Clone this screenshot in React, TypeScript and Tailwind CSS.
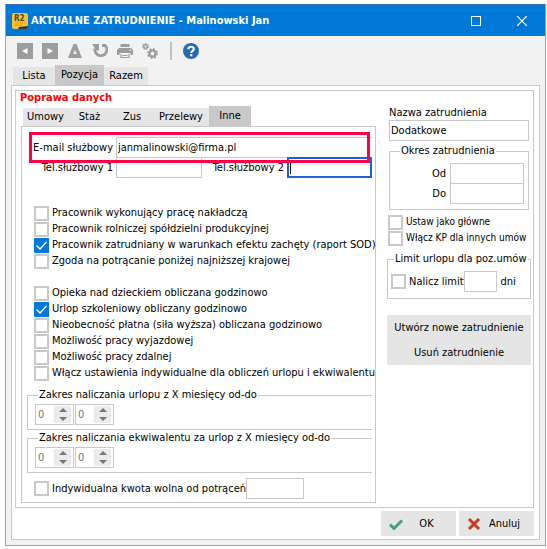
import React, { useState } from 'react';

const FIELD = 'h-[21px] min-w-0 border border-[#c8c8c8] bg-white px-px outline-none';

const EMPLOYEE_FLAGS = [
  { label: 'Pracownik wykonujący pracę nakładczą', checked: false },
  { label: 'Pracownik rolniczej spółdzielni produkcyjnej', checked: false },
  { label: 'Pracownik zatrudniany w warunkach efektu zachęty (raport SOD)', checked: true },
  { label: 'Zgoda na potrącanie poniżej najniższej krajowej', checked: false },
];

const TIME_FLAGS = [
  { label: 'Opieka nad dzieckiem obliczana godzinowo', checked: false },
  { label: 'Urlop szkoleniowy obliczany godzinowo', checked: true },
  { label: 'Nieobecność płatna (siła wyższa) obliczana godzinowo', checked: false },
  { label: 'Możliwość pracy wyjazdowej', checked: false },
  { label: 'Możliwość pracy zdalnej', checked: false },
  { label: 'Włącz ustawienia indywidualne dla obliczeń urlopu i ekwiwalentu', checked: false },
];

function Checkbox({ label, checked = false }: { label: string; checked?: boolean }) {
  return (
    <label className="flex h-4 items-center gap-[3px] whitespace-nowrap">
      <span className="relative block h-[15px] w-[15px] shrink-0">
        <input
          type="checkbox"
          defaultChecked={checked}
          className="peer block h-[15px] w-[15px] appearance-none border-2 border-[#c8c8c8] bg-white checked:border-[#0078d7] checked:bg-[#0078d7]"
        />
        <svg viewBox="0 0 15 15" className="pointer-events-none absolute inset-0 hidden peer-checked:block">
          <path d="M2.5 7.5l3.5 3.5 6.5-7" fill="none" stroke="#fff" strokeWidth="1.3" />
        </svg>
      </span>
      {label}
    </label>
  );
}

function Spinner({ label }: { label: string }) {
  const [value, setValue] = useState(0);
  return (
    <div className="flex h-[21px] w-[39px] border border-[#c8c8c8] bg-white p-px">
      <input
        aria-label={label}
        value={value}
        onChange={(e) => setValue(Number(e.target.value) || 0)}
        className="w-[17px] min-w-0 pl-px text-[#777] outline-none"
      />
      <div className="flex w-[17px] flex-col bg-[#ebebeb]">
        <button type="button" aria-label="Zwiększ" onClick={() => setValue(value + 1)} className="flex h-2 items-center justify-center">
          <svg width="8" height="4" viewBox="0 0 8 4">
            <path d="M0 4l4-4 4 4z" fill="#777" />
          </svg>
        </button>
        <button type="button" aria-label="Zmniejsz" onClick={() => setValue(Math.max(0, value - 1))} className="flex h-[9px] items-center justify-center">
          <svg width="8" height="4" viewBox="0 0 8 4">
            <path d="M0 0l4 4 4-4z" fill="#777" />
          </svg>
        </button>
      </div>
    </div>
  );
}

function RangeGroup({ title }: { title: string }) {
  return (
    <fieldset className="ml-[5px] border border-r-0 border-[#c8c8c8] pt-[2px] pb-1 pl-[7px]">
      <legend className="ml-[3px] h-[14px] px-px leading-[14px] whitespace-nowrap">{title}</legend>
      <div className="flex gap-px">
        <Spinner label={title + ' od'} />
        <Spinner label={title + ' do'} />
      </div>
    </fieldset>
  );
}

function AppLogo() {
  return (
    <svg width="16" height="16" viewBox="0 0 16 16" className="shrink-0" fontFamily="DejaVu Sans Condensed">
      <rect width="16" height="16" rx="2" fill="#f8c22c" />
      <path d="M7 14L16 13v1a2 2 0 0 1-2 2H6z" fill="#3b3422" />
      <path d="M2.500 10h11M2.500 12h8" stroke="#cfa02a" strokeWidth="1" />
      <text x="2" y="8" fontSize="8" fontWeight="bold" fill="#54481f">
        R2
      </text>
    </svg>
  );
}

function Toolbar() {
  return (
    <div className="flex h-[29px] items-center gap-[9px] pl-[11px] text-[#9d9d9d]">
      <button type="button" aria-label="Poprzedni">
        <svg width="16" height="16" viewBox="0 0 16 16" className="block">
          <rect width="16" height="16" fill="currentColor" />
          <path d="M10.5 5v6L5 8z" fill="#fff" />
        </svg>
      </button>
      <button type="button" aria-label="Następny">
        <svg width="16" height="16" viewBox="0 0 16 16" className="block">
          <rect width="16" height="16" fill="currentColor" />
          <path d="M5.5 5v6L11 8z" fill="#fff" />
        </svg>
      </button>
      <button type="button" aria-label="Do góry">
        <svg width="16" height="16" viewBox="0 0 16 16" className="block">
          <path fillRule="evenodd" d="M6.500 1h3l5.500 14H1zM8 7l-1.800 4h3.600z" fill="currentColor" />
        </svg>
      </button>
      <button type="button" aria-label="Odśwież">
        <svg width="16" height="16" viewBox="0 0 16 16" className="block">
          <path d="M10 2.500H13.200A6 6 0 1 1 3 5.500" fill="none" stroke="currentColor" strokeWidth="2.800" />
          <path d="M0 1h7v6.500H4.500z" fill="currentColor" />
        </svg>
      </button>
      <button type="button" aria-label="Drukuj">
        <svg width="16" height="16" viewBox="0 0 16 16" className="block">
          <path d="M3.500 1h9v3h-9zM2 5h12l2 2v5h-2.500v-2h-11v2H0V7z" fill="currentColor" />
          <path d="M4 11v3.500h8V11M5.500 12.500h5" fill="none" stroke="currentColor" strokeWidth="1.200" />
          <path d="M12.500 6.500h1.500v1.200h-1.500z" fill="#f2f2f2" />
        </svg>
      </button>
      <button type="button" aria-label="Ustawienia">
        <svg width="16" height="16" viewBox="0 0 16 16" className="block" fill="none" stroke="currentColor">
          <circle cx="10.500" cy="10.500" r="3.100" strokeWidth="2.400" />
          <circle cx="10.500" cy="10.500" r="4.600" strokeWidth="1.800" strokeDasharray="1.806 1.806" />
          <circle cx="3.500" cy="3.500" r="1.800" strokeWidth="1.400" />
          <circle cx="3.500" cy="3.500" r="2.900" strokeWidth="1.200" strokeDasharray="1.300 1.302" />
        </svg>
      </button>
      <div className="ml-[3px] h-[18px] w-[2px] bg-[#c3c3c3]" />
      <button type="button" aria-label="Pomoc" className="ml-[2px]">
        <svg width="16" height="16" viewBox="0 0 16 16" className="block">
          <circle cx="8" cy="8" r="8" fill="#2a6ab0" />
          <path d="M5.300 6.200C5.300 2.800 10.800 2.900 10.800 6c0 1.900-2.600 1.900-2.600 4" fill="none" stroke="#fff" strokeWidth="2" />
          <path d="M7.100 11.200h2.200v2H7.100z" fill="#fff" />
        </svg>
      </button>
    </div>
  );
}

function App() {
  return (
    <div className="bg-white pt-1 pr-px pb-[3px] pl-[5px] font-['DejaVu_Sans_Condensed','DejaVu_Sans',sans-serif] text-[11px] leading-[14px] text-black">
      <div className="border border-[#8ba6cf] border-t-[#3c70ad] bg-[#f2f2f2]">
        <header className="flex h-[31px] items-center bg-[#0078d7] pl-[6px] text-white">
          <AppLogo />
          <h1 className="ml-[3px] flex-1 font-bold whitespace-nowrap">AKTUALNE ZATRUDNIENIE - Malinowski Jan</h1>
          <button type="button" aria-label="Maksymalizuj" className="flex w-[46px] justify-center">
            <span className="block h-[10px] w-[10px] border border-white" />
          </button>
          <button type="button" aria-label="Zamknij" className="flex w-[46px] justify-center">
            <svg width="10" height="10" viewBox="0 0 10 10">
              <path d="M0 0l10 10M10 0L0 10" stroke="#fff" strokeWidth="1.200" />
            </svg>
          </button>
        </header>

        <Toolbar />

        <nav className="flex h-5 items-end pl-[7px]">
          <button type="button" className="h-[18px] w-[42px] bg-[#e5e5e5]">Lista</button>
          <button type="button" className="h-5 w-[49px] bg-[#c8c8c8]">Pozycja</button>
          <button type="button" className="h-[18px] w-11 bg-[#e5e5e5]">Razem</button>
        </nav>

        <main className="mx-[5px] mb-[5px] border border-[#c8c8c8] bg-white pt-1 pr-[5px] pb-[3px] pl-[3px]">
          <section className="border border-[#c8c8c8] pb-1">
            <h2 className="h-[15px] pl-1 font-bold text-[#ff0000]">Poprawa danych</h2>
            <div className="flex gap-[11px] pr-[2px] pl-[5px]">
              <div className="min-w-0 flex-1">
                <nav className="flex h-5 items-end pl-[2px]">
                  <button type="button" className="h-[18px] w-[45px] bg-[#e5e5e5]">Umowy</button>
                  <button type="button" className="h-[18px] w-[43px] bg-[#e5e5e5]">Staż</button>
                  <button type="button" className="h-[18px] w-[42px] bg-[#e5e5e5]">Zus</button>
                  <button type="button" className="h-[18px] w-[56px] bg-[#e5e5e5]">Przelewy</button>
                  <button type="button" className="h-5 w-[42px] bg-[#c8c8c8]">Inne</button>
                </nav>
                <div className="relative border border-[#c8c8c8] pt-[10px] pr-[3px] pb-[3px]">
                  <div className="flex items-center">
                    <label htmlFor="email" className="w-[94px] shrink-0 pr-[3px] text-right whitespace-nowrap">E-mail służbowy</label>
                    <input id="email" type="text" defaultValue="janmalinowski@firma.pl" className={`${FIELD} flex-1 border-r-0`} />
                  </div>
                  <div className="-mt-px flex items-center">
                    <label htmlFor="tel1" className="w-[94px] shrink-0 pr-[3px] text-right whitespace-nowrap">Tel.służbowy 1</label>
                    <input id="tel1" type="text" className={`${FIELD} w-[86px]`} />
                    <label htmlFor="tel2" className="w-[85px] shrink-0 pr-[3px] text-right whitespace-nowrap">Tel.służbowy 2</label>
                    <div className="flex h-[21px] flex-1 items-center border-2 border-[#1f62cf] bg-white pl-px">
                      <span className="h-3 w-px bg-black" />
                      <input id="tel2" type="text" className="w-full min-w-0 outline-none" />
                    </div>
                  </div>
                  <div className="pointer-events-none absolute top-[5px] right-[5px] left-[7px] h-[31px] border-[3px] border-[#ff0048]" />

                  <div className="mt-[27px] pl-3">
                    {EMPLOYEE_FLAGS.map((f) => (
                      <Checkbox key={f.label} {...f} />
                    ))}
                  </div>
                  <div className="mt-4 mb-[7px] pl-3">
                    {TIME_FLAGS.map((f) => (
                      <Checkbox key={f.label} {...f} />
                    ))}
                  </div>

                  <div className="flex flex-col gap-px">
                    <RangeGroup title="Zakres naliczania urlopu z X miesięcy od-do" />
                    <RangeGroup title="Zakres naliczania ekwiwalentu za urlop z X miesięcy od-do" />
                  </div>

                  <div className="mt-[5px] flex items-center pl-3">
                    <Checkbox label="Indywidualna kwota wolna od potrąceń" />
                    <input aria-label="Kwota wolna od potrąceń" type="text" className={`${FIELD} w-[58px]`} />
                  </div>
                </div>
              </div>

              <aside className="w-[144px] shrink-0">
                <div className="mr-[2px] ml-[2px] flex flex-col">
                  <label htmlFor="name">Nazwa zatrudnienia</label>
                  <input id="name" type="text" defaultValue="Dodatkowe" className={FIELD} />
                </div>
                <fieldset className="mt-[3px] mr-[2px] ml-[2px] border border-[#c8c8c8] pt-[5px] pr-1 pb-[5px]">
                  <legend className="ml-[10px] h-[14px] px-px">Okres zatrudnienia</legend>
                  <div className="flex items-center justify-end gap-1">
                    <label htmlFor="from">Od</label>
                    <input id="from" type="text" className={`${FIELD} w-[74px]`} />
                  </div>
                  <div className="-mt-px flex items-center justify-end gap-1">
                    <label htmlFor="to">Do</label>
                    <input id="to" type="text" className={`${FIELD} w-[74px]`} />
                  </div>
                </fieldset>
                <div className="mt-1 pl-px text-[10px]">
                  <Checkbox label="Ustaw jako główne" />
                  <Checkbox label="Włącz KP dla innych umów" />
                </div>
                <fieldset className="mt-[6px] border border-[#c8c8c8] pt-[5px] pb-[6px] pl-[3px]">
                  <legend className="ml-[3px] h-[14px] px-px whitespace-nowrap">Limit urlopu dla poz.umów</legend>
                  <div className="flex items-center">
                    <Checkbox label="Nalicz limit" />
                    <input id="days" type="text" className={`${FIELD} w-[33px]`} />
                    <label htmlFor="days" className="pl-1">dni</label>
                  </div>
                </fieldset>
                <div className="mt-4 flex flex-col bg-[#e5e5e5]">
                  <button type="button" className="h-[25px]">Utwórz nowe zatrudnienie</button>
                  <button type="button" className="h-[25px]">Usuń zatrudnienie</button>
                </div>
              </aside>
            </div>
          </section>

          <footer className="flex justify-end gap-[3px] pt-[3px]">
            <button type="button" className="flex h-[25px] w-[75px] items-center bg-[#e5e5e5] pl-2">
              <svg width="14" height="12" viewBox="0 0 14 12">
                <path d="M1 6.500l4 4 8-8" fill="none" stroke="#3fa37a" strokeWidth="3" />
              </svg>
              <span className="flex-1 pr-[6px]">OK</span>
            </button>
            <button type="button" className="flex h-[25px] w-[75px] items-center bg-[#e5e5e5] pl-2">
              <svg width="14" height="12" viewBox="0 0 14 12">
                <path d="M2 1l10 10M12 1L2 11" fill="none" stroke="#cb3a1e" strokeWidth="3" />
              </svg>
              <span className="flex-1 pr-[6px]">Anuluj</span>
            </button>
          </footer>
        </main>
      </div>
    </div>
  );
}

export default App;
